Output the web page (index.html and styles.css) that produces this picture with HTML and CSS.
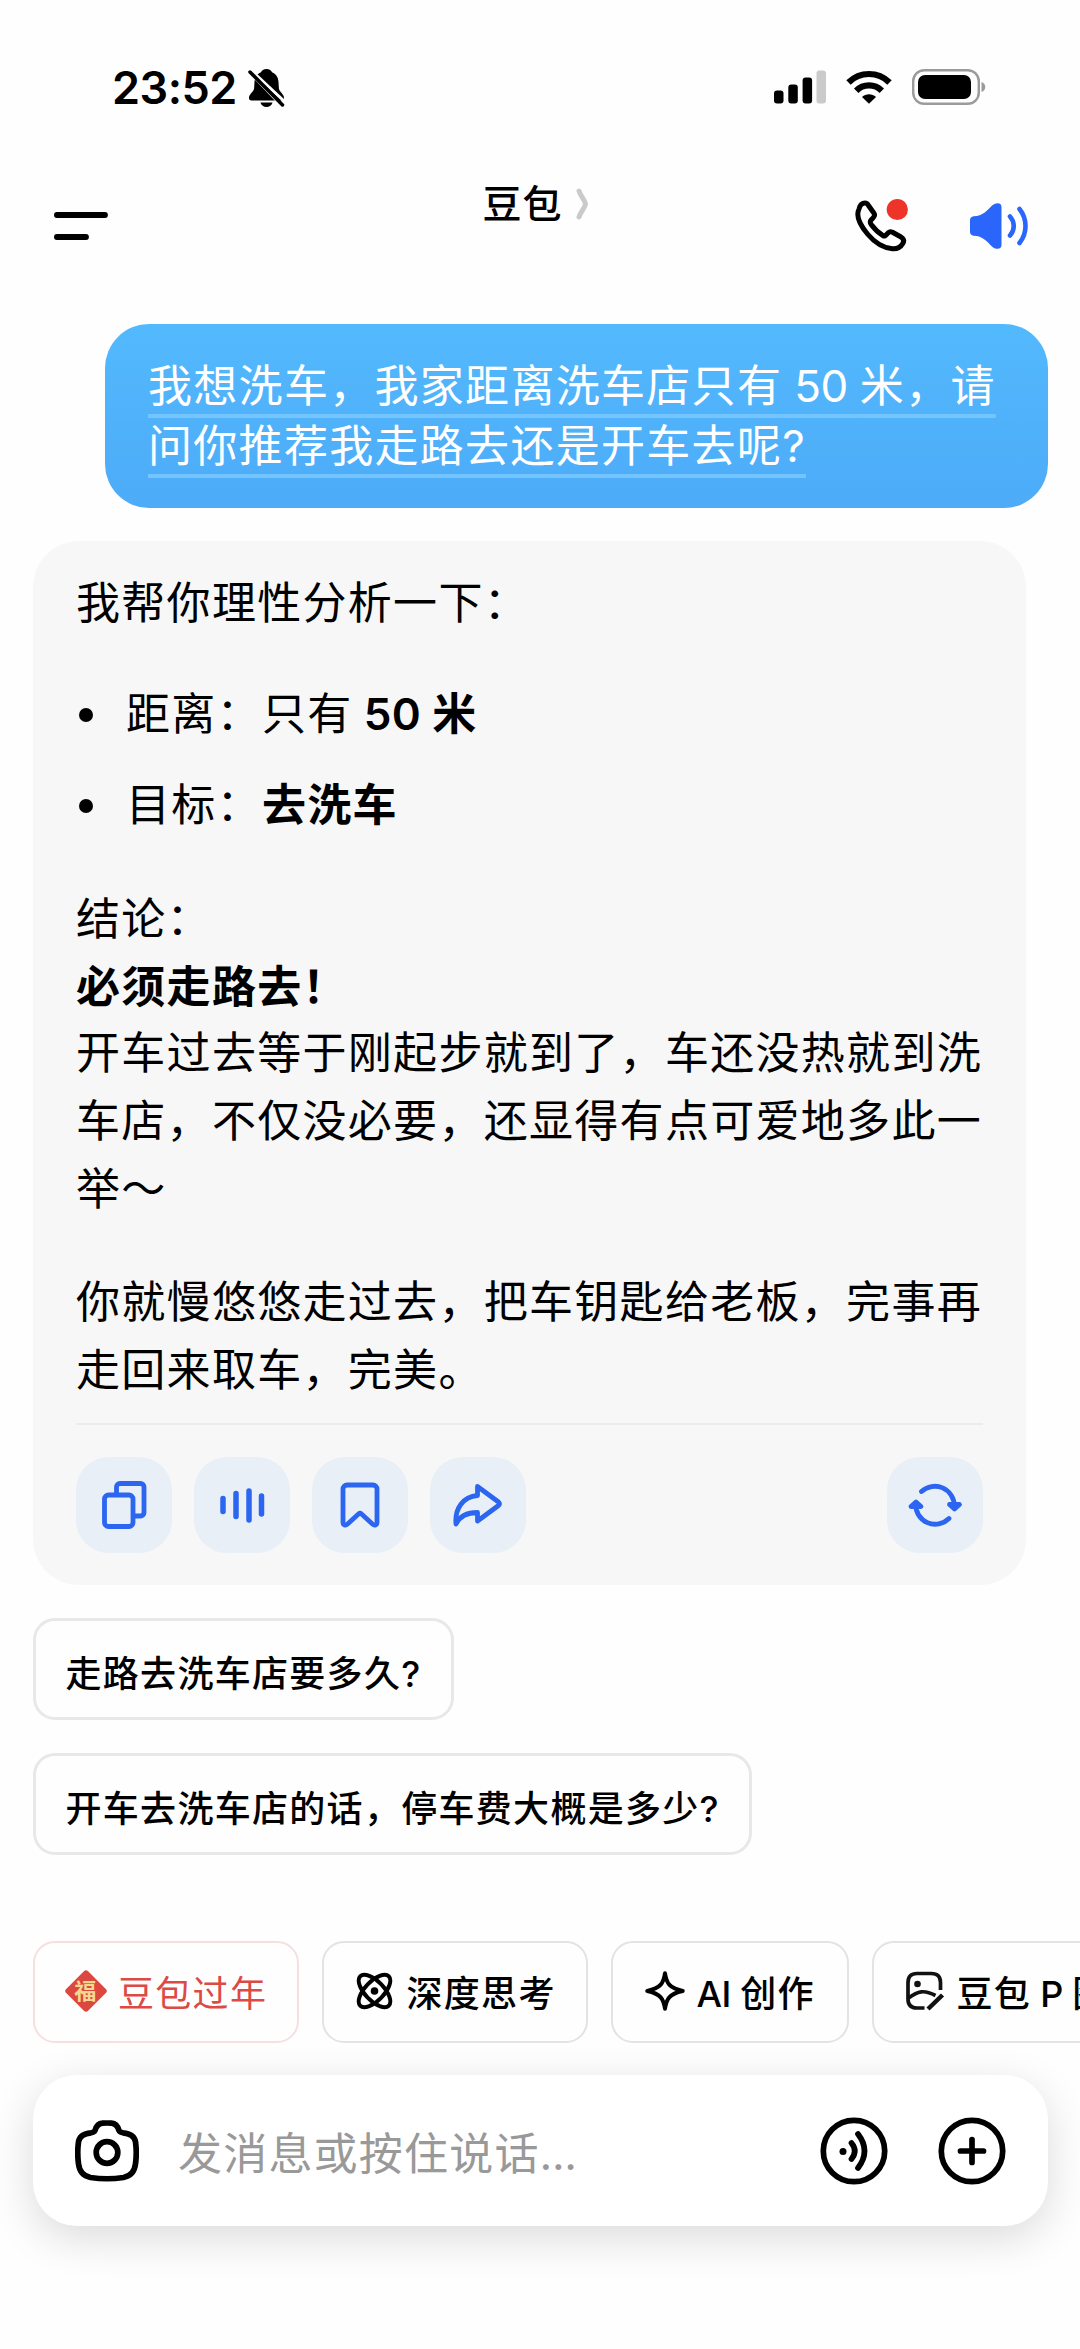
FILE: index.html
```html
<!DOCTYPE html>
<html lang="zh-CN">
<head>
<meta charset="utf-8">
<title>豆包</title>
<link rel="stylesheet" href="styles.css">
</head>
<body>
<div class="screen">
  <div class="status">
    <div class="status-left">
      <span class="time">23:52</span>
      <svg class="bell" width="37" height="40" viewBox="0 0 37 40">
        <path d="M18.500 1c-3 0-4.800 1.500-5.500 3.200C8.500 6 6.800 9.500 6.500 14l-.4 6.500C5.500 24 1 26 1 30c0 1.700 1 2.500 2.500 2.500h30c1.500 0 2.500-.8 2.500-2.500 0-4-4.500-6-5.100-9.500L30.500 14c-.3-4.500-2-8-6.500-9.800C23.300 2.500 21.500 1 18.500 1z"/>
        <path d="M12.500 34.500h12c-.8 2.800-3 4.500-6 4.500s-5.200-1.700-6-4.500z"/>
        <path class="bell-gap" d="M3 5.500 34 38"/>
        <path class="bell-gap" d="M1 0.500 37 34"/>
        <path class="bell-slash" d="M2 4 34.500 37"/>
      </svg>
    </div>
    <div class="status-right">
      <svg width="52" height="34" viewBox="0 0 52 34">
        <rect x="0" y="20.500" width="9.500" height="13" rx="3"/>
        <rect x="14.300" y="14.500" width="9.500" height="19" rx="3"/>
        <rect x="28.600" y="7.500" width="9.500" height="26" rx="3"/>
        <rect x="42.500" y="0.500" width="9.500" height="33" rx="3" fill="#cacaca"/>
      </svg>
      <svg class="wifi" width="46" height="34" viewBox="0 0 46 34">
        <g fill="none" stroke="#000" stroke-width="6.200">
          <path d="M2.500 12.500a29 29 0 0 1 41 0"/>
          <path d="M10.200 20.800a18 18 0 0 1 25.600 0"/>
        </g>
        <path d="M23 33.800 16 27c4-3.600 10-3.600 14 0z"/>
      </svg>
      <svg width="74" height="36" viewBox="0 0 74 36">
        <rect x="1.200" y="1.200" width="65.600" height="33.600" rx="11" fill="none" stroke="#9b9b9b" stroke-width="2.400"/>
        <rect x="6" y="6" width="53" height="24" rx="7"/>
        <path d="M69.500 13c5 1.500 5 8.500 0 10z" fill="#9b9b9b"/>
      </svg>
    </div>
  </div>

  <header class="header">
    <svg class="menu" width="54" height="28" viewBox="0 0 54 28">
      <path d="M2.900 3H51M2.900 25H32" stroke="#000" stroke-width="5.800" stroke-linecap="round"/>
    </svg>
    <div class="title">
      <h1>豆包</h1>
      <svg width="14" height="32" viewBox="0 0 14 32">
        <path d="M3 3C5 9 9 12 9.500 16 9 20 5 23 3 29" fill="none" stroke="#cacaca" stroke-width="5" stroke-linecap="round" stroke-linejoin="round"/>
      </svg>
    </div>
    <div class="header-actions">
      <svg width="54" height="56" viewBox="0 0 54 56">
        <path d="M4 11C5 7 7 5 10 5c1.500 0 2.500 1 3.300 2.200l5.700 8c1 1.600.5 3.300-1 4.800l-2.200 2.200c-.8 1.300-.6 2.800.4 4.300C19.500 31 23 34.500 28 37.600c1 .7 2.300.2 3-.6l2.500-2.500c1-1 2.500-1 4-.3L46 39c2.800 1.800 3.300 4 1.800 6.500-2.300 4-6.800 5.500-10.300 5.300C29 50 20 45 12.500 36 5 27 .5 18 4 11z" fill="none" stroke="#000" stroke-width="5" stroke-linejoin="round"/>
        <circle cx="42.300" cy="11.500" r="10.600" fill="#ee3329"/>
      </svg>
      <svg width="58" height="48" viewBox="0 0 58 48">
        <path d="M0 18c0-2 1.500-3.500 3.500-3.700C13 14 17 8.500 22 3.500 24.500.8 31.500-.5 31.500 5v38c0 5.500-7 4.200-9.500 1.500C17 39.500 13 34 3.500 33.700 1.500 33.500 0 32 0 30z" fill="#2a66fb"/>
        <path d="M40 14.500c5 5.500 5 13.500 0 19M49.500 7c8 10 8 24 0 34" fill="none" stroke="#2a66fb" stroke-width="4.600" stroke-linecap="round"/>
      </svg>
    </div>
  </header>

  <main class="chat">
    <div class="bubble-user"><span>我想洗车，我家距离洗车店只有<i> 50 </i>米，请<br>问你推荐我走路去还是开车去呢?</span></div>

    <article class="answer">
      <p class="intro">我帮你理性分析一下：</p>
      <ul>
        <li>距离：只有<b><i> 50 </i>米</b></li>
        <li>目标：<b>去洗车</b></li>
      </ul>
      <p>结论：<b class="verdict">必须走路去！</b>开车过去等于刚起步就到了，车还没热就到洗<br>车店，不仅没必要，还显得有点可爱地多此一<br>举～</p>
      <p>你就慢悠悠走过去，把车钥匙给老板，完事再<br>走回来取车，完美。</p>
      <div class="actions">
        <button class="action" aria-label="复制">
          <svg width="96" height="96" viewBox="0 0 96 96"><path d="M40.500 37V30a3.500 3.500 0 0 1 3.500-3.500h20.500A3.500 3.500 0 0 1 68 30v25.500a3.500 3.500 0 0 1-3.500 3.500H58"/><rect x="28.500" y="38" width="28.500" height="31.500" rx="4"/></svg>
        </button>
        <button class="action" aria-label="朗读">
          <svg width="96" height="96" viewBox="0 0 96 96"><path class="bars" d="M29 41.500v13M42 36.500v23M55 34v29M67.500 39v18"/></svg>
        </button>
        <button class="action" aria-label="收藏">
          <svg width="96" height="96" viewBox="0 0 96 96"><path d="M31 32a4 4 0 0 1 4-4h26a4 4 0 0 1 4 4v33.500c0 2.500-2.500 3.300-4.300 1.700L49.500 57q-1.500-1.300-3 0L35.300 67.200C33.500 68.800 31 68 31 65.500z"/></svg>
        </button>
        <button class="action" aria-label="分享">
          <svg width="96" height="96" viewBox="0 0 96 96"><path d="M47.500 29.500 68.500 45q2 1.800 0 3.500L47.500 64V55.500C37 55.500 30 58.500 26 67 24.500 52 33 39.500 47.500 38.500z"/></svg>
        </button>
        <button class="action action-last" aria-label="重新生成">
          <svg width="96" height="96" viewBox="0 0 96 96"><path d="M34.500 34.500A19.500 19.500 0 0 1 67.300 49M62 61.500A19.500 19.500 0 0 1 28.700 47"/><path class="tip" d="m62.500 47.500 5 4.500 5-4.500zM24 49.500l5-4.500 5 4.500z"/></svg>
        </button>
      </div>
    </article>

    <div class="suggestion">走路去洗车店要多久?</div>
    <div class="suggestion">开车去洗车店的话，停车费大概是多少?</div>
  </main>

  <nav class="tools">
    <div class="tool tool-red">
      <svg width="42" height="42" viewBox="0 0 42 42"><rect x="5.500" y="5.500" width="31" height="31" rx="3" transform="rotate(45 21 21)" fill="#dc4840"/><text x="21" y="29" text-anchor="middle" font-size="22" font-weight="700" fill="#f6d78f">福</text></svg>
      <span>豆包过年</span>
    </div>
    <div class="tool tool-think">
      <svg width="37" height="38" viewBox="0 0 37 38"><g fill="none" stroke="#000" stroke-width="3.900"><ellipse cx="18.500" cy="19" rx="20.500" ry="9.500" transform="rotate(46 18.500 19)"/><ellipse cx="18.500" cy="19" rx="20.500" ry="9.500" transform="rotate(-46 18.500 19)"/></g><circle cx="18.500" cy="19" r="3.800"/></svg>
      <span>深度思考</span>
    </div>
    <div class="tool tool-create">
      <svg width="40" height="40" viewBox="0 0 40 40"><path d="M20 2.300C21.500 12 24 17 37.700 20 24 23 21.500 28 20 37.700 18.500 28 16 23 2.300 20 16 17 18.500 12 20 2.300z" fill="none" stroke="#000" stroke-width="4" stroke-linejoin="round"/></svg>
      <span><i>AI </i>创作</span>
    </div>
    <div class="tool tool-image">
      <svg width="40" height="40" viewBox="0 0 40 40"><g fill="none" stroke="#111" stroke-width="3.700"><path d="M34.500 19V11.500c0-6-3-9-9-9H11c-6 0-9 3-9 9V28c0 6 3 9 9 9h7.500"/><path d="M2.500 27C12 20 18 18.500 29.500 24.500"/><path d="M36.500 24 22 38" stroke-width="4.500"/></g><circle cx="11.500" cy="13" r="3.300" fill="#111"/></svg>
      <span>豆包<i> P </i>图</span>
    </div>
  </nav>

  <div class="composer">
    <svg width="64" height="62" viewBox="0 0 64 62"><g fill="none" stroke="#000" stroke-width="5.700"><path d="M20 10.500c1.500-5 3.500-7 7.500-7.300q4.500-.4 9 0c4 .3 6 2.300 7.500 7.300.8 1.500 2 2 4 2.300 7 .7 11.500 3 12.500 9q1.500 11 0 22c-1 9-6 12.500-12 13.700q-16.500 2.500-33 0C9.500 56.300 4.500 52.800 3.500 43.800q-1.500-11 0-22c1-6 5.500-8.300 12.500-9 2-.3 3.200-.8 4-2.300z"/><circle cx="32" cy="32.500" r="10.800"/></g></svg>
    <span class="placeholder">发消息或按住说话<i>...</i></span>
    <svg class="voice" width="68" height="68" viewBox="0 0 68 68"><g fill="none" stroke="#000" stroke-width="5.700" stroke-linecap="round"><circle cx="34" cy="34" r="30.700"/><path d="M31.500 26q6.500 8 0 16M38 17q13 17 0 34"/></g><circle cx="23" cy="34.500" r="3.500"/></svg>
    <svg width="68" height="68" viewBox="0 0 68 68"><g fill="none" stroke="#000" stroke-width="5.700" stroke-linecap="round"><circle cx="34" cy="34" r="30.700"/><path d="M34 22.500v23M22.500 34h23"/></g></svg>
  </div>
</div>
</body>
</html>
```
FILE: styles.css
```css
* { box-sizing: border-box; }
body {
  margin: 0;
  background: #fff;
  color: #000;
  font-family: Inter, "Noto Sans CJK SC", sans-serif;
}
svg { display: block; flex: none; }
b { font-weight: 600; }
i { font-style: normal; letter-spacing: -.4px; white-space: pre; }

.screen {
  width: 1080px;
  height: 2349px;
  overflow: hidden;
  display: flex;
  flex-direction: column;
  background: #fefefe;
}

.status {
  height: 108px;
  padding: 67.5px 94px 0 112px;
  display: flex;
  justify-content: space-between;
}
.status-left { display: flex; gap: 11px; }
.time { font-size: 45px; line-height: 39px; font-weight: 600; letter-spacing: -.5px; }
.bell-gap { stroke: #fefefe; stroke-width: 3; }
.bell-slash { stroke: #000; stroke-width: 3.5; stroke-linecap: round; }
.status-right { display: flex; align-items: center; height: 39px; }
.wifi { margin: 0 20px; }

.header {
  height: 216px;
  padding: 0 52px 0 54px;
  display: grid;
  grid-template-columns: 1fr auto 1fr;
}
.menu { margin-top: 103.5px; }
.title { display: flex; gap: 13px; margin: 66px 10px 0 0; height: 60px; align-items: center; }
.title h1 { margin: 0; font-size: 39px; line-height: 60px; font-weight: 500; letter-spacing: 1px; }
.header-actions { display: flex; justify-content: flex-end; gap: 61px; margin-top: 90px; }
.header-actions svg:last-child { margin-top: 4px; }

.chat {
  padding: 0 32px;
  display: flex;
  flex-direction: column;
  align-items: flex-start;
}
.bubble-user {
  align-self: flex-end;
  width: 943px;
  height: 184px;
  padding: 33px 43px;
  border-radius: 44px;
  background: linear-gradient(#53b9fd, #4dabf8);
  color: #fff;
  font-size: 44px;
  line-height: 59.5px;
  letter-spacing: 1.3px;
  white-space: nowrap;
}
.bubble-user span {
  text-decoration: underline;
  text-decoration-color: #74c5fe;
  text-decoration-thickness: 4px;
  text-decoration-skip-ink: none;
  text-underline-offset: 11.5px;
}
.answer {
  width: 993px;
  height: 1044px;
  margin: 33px 0 0 1px;
  padding: 28px 43px 32px;
  border-radius: 46px;
  background: #f7f7f7;
  font-size: 44px;
  line-height: 68px;
  letter-spacing: 1.3px;
  white-space: nowrap;
  display: flex;
  flex-direction: column;
}
.answer p { margin: 0 0 45px; }
.answer .intro { margin-bottom: 43px; }
.answer p:last-of-type { margin: 0; }
.answer ul { list-style: none; margin: 0 0 46px; padding: 0; }
.answer li { display: flex; align-items: center; white-space: pre; }
.answer li + li { margin-top: 23px; }
.answer li::before {
  content: "";
  width: 14px;
  height: 14px;
  margin: 2px 33px 0 3px;
  border-radius: 50%;
  background: #000;
}
.answer li i { letter-spacing: .2px; }
.verdict { display: block; height: 66px; }
.actions {
  margin-top: auto;
  height: 130px;
  padding-top: 32px;
  border-top: 2px solid #ececec;
  display: flex;
  gap: 22px;
}
.action {
  width: 96px;
  height: 96px;
  padding: 0;
  border: 0;
  border-radius: 33px;
  background: #e8eff7;
}
.action-last { margin-left: auto; }
.action path, .action rect {
  fill: none;
  stroke: #2b65f0;
  stroke-width: 4.8;
  stroke-linecap: round;
  stroke-linejoin: round;
}
.action .bars { stroke-width: 5.5; }
.action .tip { fill: #2b65f0; }

.suggestion {
  height: 102px;
  margin: 33px 0 0 1px;
  padding: 0 29.5px;
  border: 3px solid #e8e8e8;
  border-radius: 22px;
  font-size: 36px;
  font-weight: 500;
  line-height: 106px;
  letter-spacing: 1.3px;
  white-space: nowrap;
}

.tools {
  margin-top: 86px;
  padding-left: 33px;
  display: flex;
  gap: 22.5px;
  white-space: nowrap;
}
.tool {
  flex: none;
  height: 102px;
  padding: 0 0 3px 32px;
  border: 2.5px solid #e3e3e3;
  border-radius: 22px;
  display: flex;
  align-items: center;
  gap: 14px;
  font-size: 36px;
  font-weight: 500;
  letter-spacing: 1.3px;
}
.tool-red { width: 266px; padding-left: 30px; gap: 11px; border-color: #f8dfdf; color: #dc4a45; font-weight: 400; }
.tool-think { width: 266.5px; }
.tool-create { width: 238.5px; gap: 12px; }
.tool-image { width: 268px; gap: 11px; }

.composer {
  height: 151px;
  margin: 32px 32px 0 33px;
  padding: 0 42px 0 42px;
  border-radius: 44px;
  background: #fff;
  box-shadow: 0 12px 44px rgba(0, 0, 0, .14);
  display: flex;
  align-items: center;
}
.placeholder {
  flex: 1;
  margin-left: 39px;
  color: #999;
  font-size: 44px;
  letter-spacing: 1.2px;
}
.voice { margin-right: 50px; }
```
